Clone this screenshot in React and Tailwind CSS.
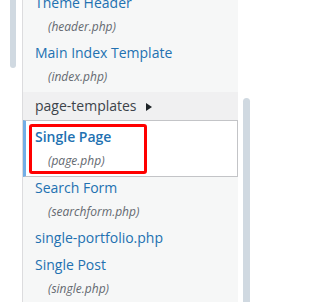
const files = [
  { name: "Theme Header", file: "(header.php)" },
  { name: "Main Index Template", file: "(index.php)" },
];

const rest = [
  { name: "Search Form", file: "(searchform.php)" },
  { name: "single-portfolio.php" },
  { name: "Single Post", file: "(single.php)" },
];

const Entry = ({ name, file }) => (
  <li>
    <a className="block pl-[12px] pb-[5px]">
      <span className="block text-[14px] leading-[22px] text-[#2271b1]">{name}</span>
      {file && (
        <span className="block pl-[13px] pt-[3px] text-[12px] leading-[20px] italic text-[#646970]">
          {file}
        </span>
      )}
    </a>
  </li>
);

const App = () => {
  return (
    <div className="flex h-[302px] w-[256px] overflow-hidden bg-white font-['Open_Sans',sans-serif]">
      {/* left scrollbar */}
      <div className="w-[22px] shrink-0">
        <div className="ml-[10px] h-[68px] w-[6px] rounded-b-full bg-[#d0d9e1]" />
      </div>

      {/* file list */}
      <div className="w-[216px] shrink-0 border-l border-[#dcdcde] bg-[#f6f7f7]">
        <ul className="-mt-[8px]">
          {files.map((f) => (
            <Entry key={f.name} {...f} />
          ))}
          <li className="bg-[#f0f0f1]">
            <div className="flex h-[28px] items-start pl-[12px] pt-[3px]">
              <span className="text-[14px] leading-[22px] text-[#3c434a]">page-templates</span>
              <svg className="ml-[9px] mt-[8px]" width="6" height="8" viewBox="0 0 6 8">
                <polygon points="0,0 6,4 0,8" fill="#1d2327" />
              </svg>
            </div>
            <ul>
              <li className="relative border-y border-r border-l-[3px] border-[#c3c4c7] border-l-[#72aee6] bg-white pt-[5px] pb-[5px] pl-[9px]">
                <span className="block text-[14px] font-semibold leading-[22px] text-[#2271b1]">Single Page</span>
                <span className="block pl-[13px] pt-[3px] text-[12px] leading-[20px] italic text-[#646970]">
                  (page.php)
                </span>
                <div className="absolute left-[3px] top-[3px] h-[50px] w-[118px] rounded-[3px] border-[3px] border-[#ff0000]" />
              </li>
            </ul>
          </li>
          {rest.map((f) => (
            <Entry key={f.name} {...f} />
          ))}
        </ul>
      </div>

      {/* right scrollbar */}
      <div className="w-[18px] shrink-0">
        <div className="ml-[5px] mt-[98px] h-[230px] w-[7px] rounded-t-full bg-[#d0d9e1]" />
      </div>
    </div>
  );
};

export default App;
